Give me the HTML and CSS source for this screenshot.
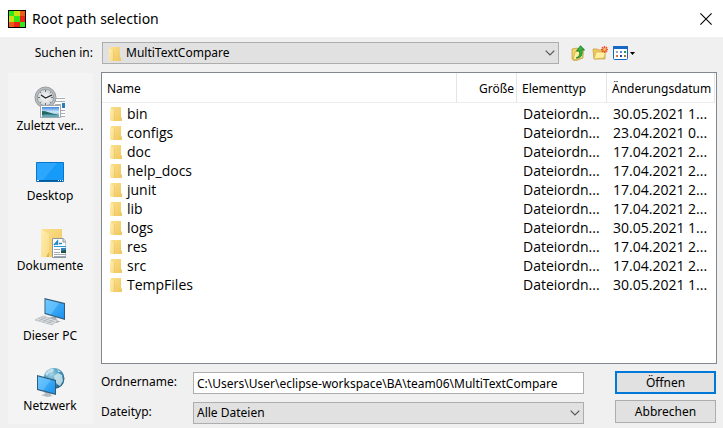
FILE: index.html
```html
<!DOCTYPE html>
<html lang="de">
<head>
<meta charset="utf-8">
<title>Root path selection</title>
<link rel="stylesheet" href="styles.css">
</head>
<body>
<svg class="defs" aria-hidden="true">
  <defs>
    <linearGradient id="gold" x1="0" x2="1" y1="0" y2="1"><stop offset="0" stop-color="#fbe08c"/><stop offset="1" stop-color="#efc65e"/></linearGradient>
    <linearGradient id="flap" x1="0" x2="1" y1="0" y2="1"><stop offset="0" stop-color="#ffeeb4"/><stop offset="1" stop-color="#f8da83"/></linearGradient>
    <linearGradient id="screen" x1="0" x2="1" y1="0" y2="1"><stop offset="0" stop-color="#56bdfd"/><stop offset="1" stop-color="#1d92ef"/></linearGradient>
    <linearGradient id="photo" x1="0" x2="0" y1="0" y2="1"><stop offset="0" stop-color="#3f86dc"/><stop offset=".5" stop-color="#d3ecfa"/><stop offset="1" stop-color="#3f8fa5"/></linearGradient>
    <radialGradient id="globe" cx=".38" cy=".3" r=".75"><stop offset="0" stop-color="#a7d4e8"/><stop offset=".5" stop-color="#4a9cc0"/><stop offset="1" stop-color="#1b5c80"/></radialGradient>
    <radialGradient id="dial"><stop offset="0" stop-color="#fafafa"/><stop offset="1" stop-color="#cfd3d5"/></radialGradient>
    <symbol id="folder" viewBox="0 0 12 14"><path fill="url(#gold)" d="M1 0h10v10l1 1v3H1z"/><path fill="url(#flap)" d="M0 1l4 2v11H1L0 13z"/><path fill="#e4b951" d="M4 3v11h1V3z" opacity=".35"/></symbol>
    <symbol id="chevron" viewBox="0 0 10 6"><path d="M.7.7 5 5 9.3.7" fill="none" stroke="#555" stroke-width="1.2"/></symbol>
  </defs>
</svg>
<div class="dialog">
  <header class="titlebar">
    <svg class="app-icon" viewBox="0 0 18 18" aria-hidden="true"><path d="M0 0h18v18H0z"/><path fill="#30e818" d="M1 1h5v5H1zM6 6h6v6H6zM12 12h5v5h-5z"/><path fill="#cbe010" d="M6 1h6v5H6zM1 6h5v6H1z"/><path fill="#ec5c18" d="M12 1h5v5h-5zM1 12h5v5H1z"/><path fill="#ee2414" d="M12 6h5v6h-5zM6 12h6v5H6z"/></svg>
    <h1 class="title">Root path selection</h1>
    <button class="close" type="button" aria-label="Schließen"><svg viewBox="0 0 12 12"><path d="M.4.4l11.2 11.2M11.6.4.4 11.6" stroke="#000" stroke-width="1.1"/></svg></button>
  </header>
  <div class="toolbar">
    <label class="look-label" for="look">Suchen in:</label>
    <div class="combo look">
      <svg class="combo-folder" aria-hidden="true"><use href="#folder"/></svg>
      <select id="look"><option>MultiTextCompare</option></select>
      <svg class="chevron" aria-hidden="true"><use href="#chevron"/></svg>
    </div>
    <div class="tools">
      <button class="tool" type="button" aria-label="Übergeordneter Ordner"><svg viewBox="0 0 16 16"><path d="M1 4l5-1 1 1 5-1v10l-8 3-3-2z" fill="#f2d467" stroke="#bf9736" stroke-width=".7"/><path d="M2 15 4 7l9-2-2 8z" fill="#fff09a" stroke="#c5a23f" stroke-width=".7"/><path d="M5 13c3-1 4-3 3.500-7H5.500L9.500.7 13.500 5H11c1 5-1 8-6 8z" fill="#38b044" stroke="#12792a" stroke-width=".8"/></svg></button>
      <button class="tool" type="button" aria-label="Neuer Ordner"><svg viewBox="0 0 16 16"><path d="M1 4h4l2 1h6v9H2z" fill="#efcb5a" stroke="#c49a35" stroke-width=".7"/><path d="M2 14 4 7h9l1-1-2 7z" fill="#fff0a0" stroke="#d0a94a" stroke-width=".7"/><path d="M12.500 1v7M9 4.500h7M10 2l5 5M15 2l-5 5" stroke="#ef562b" stroke-width="1.300"/><circle cx="12.500" cy="4.500" r="1.400" fill="#ffc272"/></svg></button>
      <button class="tool view" type="button" aria-label="Ansicht"><svg viewBox="0 0 24 16"><rect x=".5" y="1.500" width="14" height="13" rx="1" fill="#fff" stroke="#1768c4"/><path d="M0 1h15v3H0z" fill="#1768c4"/><path d="M3 6h2v2H3z" fill="#9aa6b8"/><path d="M7 6h2v2H7z" fill="#5d86dd"/><path d="M11 6h2v2h-2z" fill="#2a9c48"/><path d="M3 10h2v2H3z" fill="#ed6948"/><path d="M7 10h2v2H7z" fill="#29459f"/><path d="M11 10h2v2h-2z" fill="#a8742b"/><path d="M17 7h5l-2.500 3z"/></svg></button>
    </div>
  </div>
  <div class="content">
    <nav class="places">
      <button class="place" type="button"><svg viewBox="0 0 32 32" aria-hidden="true"><path d="M20 11h11v20H20z" fill="#fff"/><path d="M21 12.500h10M21 15.500h10M21 18.500h6M21 21.500h6M21 24.500h10M21 27.500h10M21 30.500h10" stroke="#a9adb3"/><path d="M28 17h3v5h-3z" fill="#287ebb"/><circle cx="11.500" cy="11.500" r="10.500" fill="#b9bec1" stroke="#959b9f"/><circle cx="11.500" cy="11.500" r="8.200" fill="url(#dial)" stroke="#858b8f" stroke-width=".7"/><path d="M11.500 4v2M11.500 17v2M4 11.500h2M17 11.500h2M6.200 6.200l1 1M16.800 6.200l-1 1M6.200 16.800l1-1M16.800 16.800l-1-1" stroke="#555" stroke-width=".8"/><path d="M7 9l4.500 3L18 9" fill="none" stroke="#222" stroke-width="1.300"/><path d="M6.500 19.500h20v12h-20z" fill="#fff" stroke="#a2a7aa"/><path d="M8 21h17v10H8z" fill="url(#photo)"/><path d="M8 25c5 0 8 2 12 3l5 1v2H8z" fill="#226763"/><path d="M8 29c7-1 11 0 17 0v2H8z" fill="#63a6b8"/></svg><span>Zuletzt ver...</span></button>
      <button class="place" type="button"><svg viewBox="0 0 32 32" aria-hidden="true"><path d="M2.500 6.500h27v19h-27z" fill="#169cf8" stroke="#0875c9"/><path d="M3 7h20L9 24H3z" fill="#38abff" opacity=".7"/><path d="M3 24h26v1.500H3z" fill="#075997"/><path d="M3 24h2v1H3zM24 24h1v1h-1zM26 24h1v1h-1zM28 24h1v1h-1z" fill="#fff"/></svg><span>Desktop</span></button>
      <button class="place" type="button"><svg viewBox="0 0 32 32" aria-hidden="true"><path d="M8 3h20v28H8z" fill="url(#gold)"/><path d="M7 3l8 5v18l-3 5H7z" fill="url(#flap)"/><path d="M15 8v18l-3 5h3z" fill="#e5b84d"/><path d="M18.500 12.500H29l3 3v16H18.500z" fill="#fff" stroke="#8c969e"/><path d="M29 12v4h3" fill="#ddd" stroke="#8c969e"/><path d="M20 19l3.500-4v4M21 18h3M25 17.500h3" stroke="#2684c6" stroke-width="1.400" fill="none"/><path d="M20 20.500h12" stroke="#299be0"/><path d="M20 23.500h6M20 26.500h6M20 28.500h12M20 30.500h12" stroke="#a2a9b0"/><path d="M27 22h5v5h-5z" fill="#377ebc"/><path d="M27 25l5-1v3h-5z" fill="#245344"/></svg><span>Dokumente</span></button>
      <button class="place" type="button"><svg viewBox="0 0 32 32" aria-hidden="true"><path d="M17 21h5l1 4h4l-4 2-9-3z" fill="#aab2b9"/><path d="M10.500 2 31 7v17l-20.500-6z" fill="#315c7b"/><path d="M11.500 3.500 30 8v14.500L11.500 17z" fill="url(#screen)"/><path d="M11.500 3.500 25 7l-8 11.500-5.500-1.500z" fill="#89d4ff" opacity=".45"/><path d="M9 20l15 4.500-6 4.500-17-5z" fill="#dfe2e5" stroke="#a5acb2" stroke-width=".6"/><path d="M7 21.500l14 4.500M4.500 22.500l14 5M5 25l7-4M9 26l7-4M13 27.500l7-4" stroke="#9ca4aa" stroke-width=".6"/></svg><span>Dieser PC</span></button>
      <button class="place" type="button"><svg viewBox="0 0 32 32" aria-hidden="true"><circle cx="20" cy="12.500" r="10.500" fill="url(#globe)"/><path d="M11 8c3-5 7-6 9-5l-1 3-4 1-2 3zM20 10l4-3 4 2 1 6-3 5-3-2-2-3zM23 3l4 3-3 0z" fill="#d5ebef" opacity=".8"/><path d="M10 26h6l1 3 2 1-6 1-6-2 4-1z" fill="#b4bbc0"/><path d="M3 9l19 5v15L3 24z" fill="#315c7b"/><path d="M4 10.500 21 15v12.500L4 23z" fill="url(#screen)"/><path d="M4 10.500 17 14l-8 10.300L4 23z" fill="#89d4ff" opacity=".4"/></svg><span>Netzwerk</span></button>
    </nav>
    <main class="main">
      <div class="list">
        <table class="files">
          <colgroup><col><col class="c-size"><col class="c-type"><col class="c-date"></colgroup>
          <thead><tr><th>Name</th><th class="size">Größe</th><th>Elementtyp</th><th>Änderungsdatum</th></tr></thead>
          <tbody>
            <tr><td><svg class="folder" aria-hidden="true"><use href="#folder"/></svg>bin</td><td></td><td>Dateiordn...</td><td>30.05.2021 1...</td></tr>
            <tr><td><svg class="folder" aria-hidden="true"><use href="#folder"/></svg>configs</td><td></td><td>Dateiordn...</td><td>23.04.2021 0...</td></tr>
            <tr><td><svg class="folder" aria-hidden="true"><use href="#folder"/></svg>doc</td><td></td><td>Dateiordn...</td><td>17.04.2021 2...</td></tr>
            <tr><td><svg class="folder" aria-hidden="true"><use href="#folder"/></svg>help_docs</td><td></td><td>Dateiordn...</td><td>17.04.2021 2...</td></tr>
            <tr><td><svg class="folder" aria-hidden="true"><use href="#folder"/></svg>junit</td><td></td><td>Dateiordn...</td><td>17.04.2021 2...</td></tr>
            <tr><td><svg class="folder" aria-hidden="true"><use href="#folder"/></svg>lib</td><td></td><td>Dateiordn...</td><td>17.04.2021 2...</td></tr>
            <tr><td><svg class="folder" aria-hidden="true"><use href="#folder"/></svg>logs</td><td></td><td>Dateiordn...</td><td>30.05.2021 1...</td></tr>
            <tr><td><svg class="folder" aria-hidden="true"><use href="#folder"/></svg>res</td><td></td><td>Dateiordn...</td><td>17.04.2021 2...</td></tr>
            <tr><td><svg class="folder" aria-hidden="true"><use href="#folder"/></svg>src</td><td></td><td>Dateiordn...</td><td>17.04.2021 2...</td></tr>
            <tr><td><svg class="folder" aria-hidden="true"><use href="#folder"/></svg>TempFiles</td><td></td><td>Dateiordn...</td><td>30.05.2021 1...</td></tr>
          </tbody>
        </table>
      </div>
      <form class="form">
        <div class="fields">
          <label for="name">Ordnername:</label>
          <input id="name" class="name" type="text" value="C:\Users\User\eclipse-workspace\BA\team06\MultiTextCompare">
          <label for="type">Dateityp:</label>
          <div class="combo">
            <select id="type"><option>Alle Dateien</option></select>
            <svg class="chevron" aria-hidden="true"><use href="#chevron"/></svg>
          </div>
        </div>
        <div class="actions">
          <button class="btn primary" type="button">Öffnen</button>
          <button class="btn" type="button">Abbrechen</button>
        </div>
      </form>
    </main>
  </div>
</div>
</body>
</html>
```
FILE: styles.css
```css
* { box-sizing: border-box; }
body { margin: 0; background: #f0f0f0; color: #000; font: 12px/16px "Noto Sans", sans-serif; }
button, input, select { font: inherit; color: inherit; }
svg { display: block; }
.defs { position: absolute; width: 0; height: 0; }
.dialog { display: flex; flex-direction: column; min-height: 100vh; }

.titlebar { display: flex; align-items: center; height: 37px; padding: 0 11px 0 8px; background: #fff; }
.app-icon { width: 18px; height: 18px; }
.title { flex: 1; margin: 0 0 0 6px; font: 14px/20px "Noto Sans", sans-serif; }
.close { padding: 0; border: 0; background: none; }
.close svg { width: 12px; height: 12px; }

.toolbar { display: flex; align-items: center; padding: 5px 88px 8px 8px; }
.look-label { width: 94px; padding-right: 9px; text-align: right; }
.combo { position: relative; }
.look { flex: 1; }
.combo select { display: block; width: 100%; height: 22px; padding: 0 24px 0 3px; border: 1px solid #adadad; border-radius: 0; background: #e1e1e1; appearance: none; }
.look select { padding-left: 23px; }
.combo-folder { position: absolute; left: 7px; top: 5px; width: 12px; height: 14px; pointer-events: none; }
.chevron { position: absolute; right: 4px; top: 8px; width: 10px; height: 6px; pointer-events: none; }
.tools { display: flex; gap: 5px; width: 76px; padding-left: 12px; }
.tool { flex: none; padding: 0; border: 0; background: none; }
.tool svg { width: 16px; height: 16px; }
.tool.view svg { width: 24px; }

.content { display: flex; flex: 1; gap: 8px; padding: 0 6px 4px 8px; }
.places { width: 85px; margin-top: 1px; background: #f4f4f4; }
.place { display: block; width: 100%; height: 70px; padding: 13px 1px 9px 0; border: 0; background: none; text-align: center; white-space: nowrap; }
.place svg { width: 32px; height: 32px; margin: 0 auto; }
.place span { display: block; }

.main { display: flex; flex: 1; flex-direction: column; min-width: 0; }
.list { flex: 1; padding-right: 1px; border: 1px solid #828790; background: #fff; }
.files { width: 100%; border-collapse: separate; border-spacing: 0; table-layout: fixed; white-space: nowrap; }
.c-size { width: 60px; }
.c-type { width: 90px; }
.c-date { width: 108px; }
.files th { height: 30px; padding: 2px 2px 0 5px; border-right: 1px solid #e5e5e5; border-bottom: 1px solid #ededed; font-weight: 400; text-align: left; }
.files .size { text-align: right; }
.files td { height: 19px; padding: 0 0 0 6px; font: 14px/19px "Open Sans", sans-serif; }
.files tbody td:first-child { padding-left: 8px; }
.files tbody::before { content: ""; display: table-row; height: 1px; }
.folder { display: inline-block; width: 12px; height: 14px; margin-right: 5px; vertical-align: -2px; }

.form { display: flex; gap: 31px; padding-top: 7px; padding-right: 1px; }
.fields { display: grid; flex: 1; grid-template-columns: 92px 1fr; row-gap: 8px; padding-top: 1px; }
.fields label { line-height: 20px; }
.name { width: 100%; height: 22px; padding: 0 3px; border: 1px solid #adadad; border-radius: 0; background: #fff; }
.actions { display: flex; flex-direction: column; gap: 6px; width: 101px; }
.btn { height: 23px; padding: 0; border: 1px solid #adadad; border-radius: 0; background: #e1e1e1; }
.primary { border: 2px solid #0078d7; }
```
